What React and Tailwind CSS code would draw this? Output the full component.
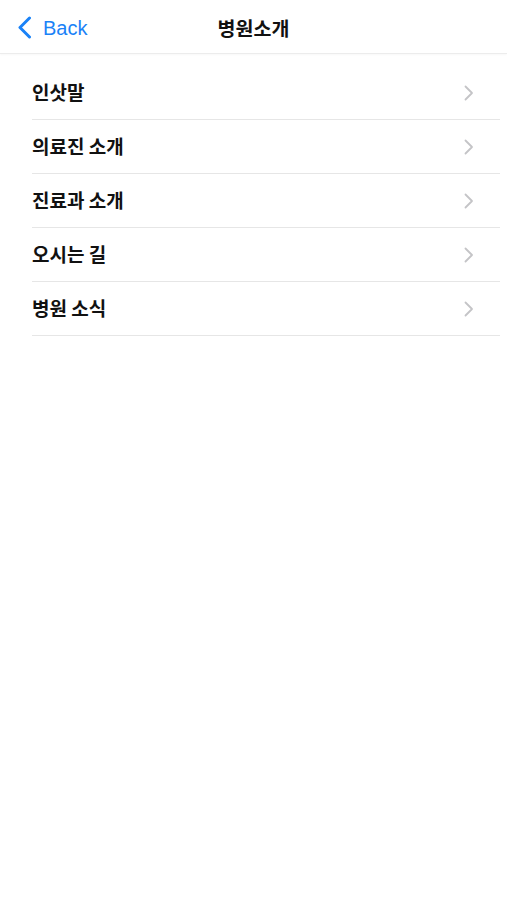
import React from 'react';

const items = ['인삿말', '의료진 소개', '진료과 소개', '오시는 길', '병원 소식'];

function ChevronRight() {
  return (
    <svg width="10" height="16" viewBox="0 0 10 16" fill="none">
      <path d="M1.5 1.5L8 8L1.5 14.5" stroke="#c4c4c7" strokeWidth="1.8" strokeLinecap="round" strokeLinejoin="round" />
    </svg>
  );
}

export default function App() {
  return (
    <div className="min-h-[900px] w-full bg-white" style={{ fontFamily: '"Noto Sans CJK KR", "Liberation Sans", sans-serif' }}>
      {/* Nav bar */}
      <header className="relative flex items-center h-[54px] border-b border-[#ececec] shadow-[0_1px_2px_rgba(0,0,0,0.03)]">
        <button className="flex items-center gap-[11px] pl-[17px] pt-[2px] text-[#1a82f7]">
          <svg width="15" height="23" viewBox="0 0 15 23" fill="none">
            <path d="M12.5 2L3 11.5L12.5 21" stroke="#1a82f7" strokeWidth="3" strokeLinecap="round" strokeLinejoin="round" />
          </svg>
          <span className="text-[20px] leading-none" style={{ fontFamily: '"Liberation Sans", sans-serif' }}>Back</span>
        </button>
        <h1 className="absolute left-1/2 -translate-x-1/2 pt-[2px] text-[19.5px] font-semibold text-[#111]">병원소개</h1>
      </header>

      {/* Menu list */}
      <ul className="mt-[12px] ml-[32px] mr-[7px]">
        {items.map((label) => (
          <li key={label} className="flex items-center justify-between h-[54px] border-b border-[#e6e6e6] pr-[26px]">
            <span className="text-[19px] font-semibold text-[#111]">{label}</span>
            <ChevronRight />
          </li>
        ))}
      </ul>
    </div>
  );
}
